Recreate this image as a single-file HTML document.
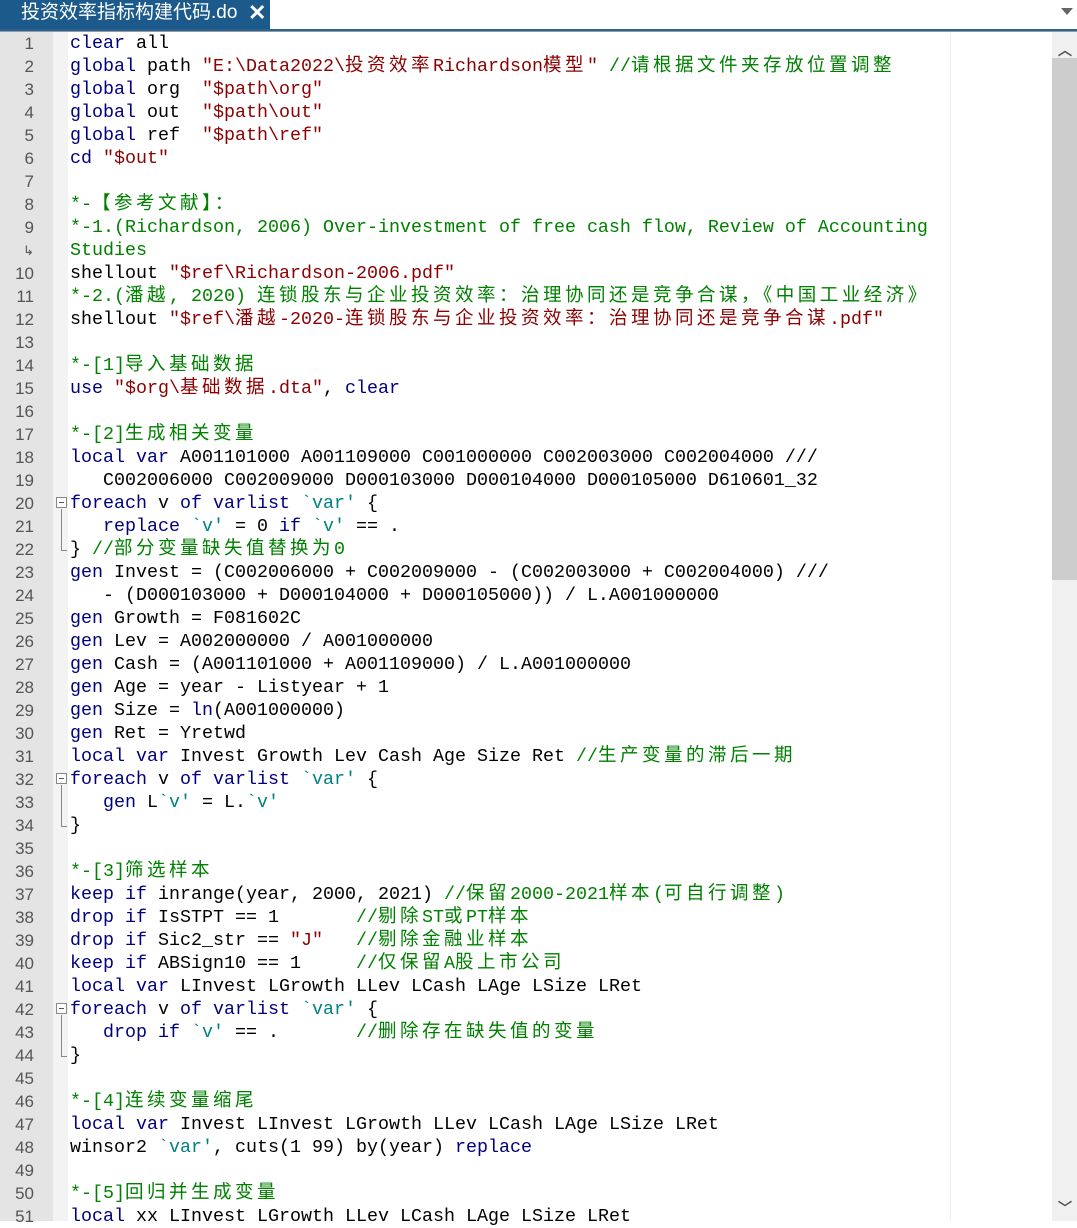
<!DOCTYPE html>
<html><head><meta charset="utf-8"><style>
*{margin:0;padding:0;box-sizing:border-box}
body{width:1077px;height:1221px;overflow:hidden;background:#fff;position:relative;font-family:"Liberation Mono","Noto Sans CJK SC",monospace}
#tabbar{position:absolute;left:0;top:0;width:1077px;height:29px;background:#fff}
#tab{position:absolute;left:0;top:0;width:270px;height:29px;background:#1b5a8a;color:#fff;font:19px "Liberation Sans","Noto Sans CJK SC",sans-serif;line-height:26px;padding-left:21px}
#tab b{position:absolute;left:248px;top:0;font-size:22px;font-weight:bold}
#dd{position:absolute;left:1061px;top:8px;width:0;height:0;border-left:6px solid transparent;border-right:6px solid transparent;border-top:7px solid #666}
#l1{position:absolute;left:0;top:29px;width:1077px;height:2px;background:#2a6496}
#l2{position:absolute;left:0;top:31px;width:1077px;height:1px;background:#999}
#gut{position:absolute;left:0;top:32px;width:53px;height:1189px;background:#e4e4e4}
#fold{position:absolute;left:53px;top:32px;width:15px;height:1189px;background:#f3f3f3}
#nums{position:absolute;left:0;top:32px;width:34px;text-align:right;font:17px "Liberation Sans",sans-serif;line-height:23px;color:#555}
#nums div{height:23px}
#code{position:absolute;left:70px;top:32px;font-size:18.33px;line-height:23px;white-space:pre;color:#000}
i{font-style:normal;font-family:"Noto Sans CJK SC",sans-serif;font-size:18.5px;letter-spacing:3.5px;line-height:0}
.k{color:#00007f}.s{color:#8b0000}.c{color:#008000}.m{color:#008080}
#edge{position:absolute;left:950px;top:32px;width:1px;height:1189px;background:#eee}
#sb{position:absolute;left:1052px;top:32px;width:25px;height:1189px;background:#f0f0f0}
#thumb{position:absolute;left:1052px;top:58px;width:25px;height:522px;background:#cdcdcd}
.fb{position:absolute;left:56px;width:11px;height:11px;border:1px solid #888;background:#fff}
.fb:after{content:"";position:absolute;left:2px;top:4px;width:5px;height:1px;background:#555}
.fl{position:absolute;left:61px;width:1px;background:#888}
.fe{position:absolute;left:61px;width:6px;height:1px;background:#888}
</style></head><body>
<div id="tabbar"><div id="tab">投资效率指标构建代码.do<b>✕</b></div><div id="dd"></div></div>
<div id="l1"></div><div id="l2"></div>
<div id="gut"></div><div id="fold"></div>
<div id="nums"><div>1</div><div>2</div><div>3</div><div>4</div><div>5</div><div>6</div><div>7</div><div>8</div><div>9</div><div style="font-size:13px">↳</div><div>10</div><div>11</div><div>12</div><div>13</div><div>14</div><div>15</div><div>16</div><div>17</div><div>18</div><div>19</div><div>20</div><div>21</div><div>22</div><div>23</div><div>24</div><div>25</div><div>26</div><div>27</div><div>28</div><div>29</div><div>30</div><div>31</div><div>32</div><div>33</div><div>34</div><div>35</div><div>36</div><div>37</div><div>38</div><div>39</div><div>40</div><div>41</div><div>42</div><div>43</div><div>44</div><div>45</div><div>46</div><div>47</div><div>48</div><div>49</div><div>50</div><div>51</div></div>
<div class="fb" style="top:497px"></div><div class="fl" style="top:509px;height:41px"></div><div class="fe" style="top:550px"></div>
<div class="fb" style="top:773px"></div><div class="fl" style="top:785px;height:41px"></div><div class="fe" style="top:826px"></div>
<div class="fb" style="top:1003px"></div><div class="fl" style="top:1015px;height:41px"></div><div class="fe" style="top:1056px"></div>
<div id="edge"></div>
<div id="code"><span class="k">clear</span> all
<span class="k">global</span> path <span class="s">"E:\Data2022\<i>投资效率</i>Richardson<i>模型</i>"</span> <span class="c">//<i>请根据文件夹存放位置调整</i></span>
<span class="k">global</span> org  <span class="s">"$path\org"</span>
<span class="k">global</span> out  <span class="s">"$path\out"</span>
<span class="k">global</span> ref  <span class="s">"$path\ref"</span>
<span class="k">cd</span> <span class="s">"$out"</span>

<span class="c">*-<i>【参考文献】：</i></span>
<span class="c">*-1.(Richardson, 2006) Over-investment of free cash flow, Review of Accounting</span>
<span class="c">Studies</span>
shellout <span class="s">"$ref\Richardson-2006.pdf"</span>
<span class="c">*-2.(<i>潘越</i>, 2020) <i>连锁股东与企业投资效率：治理协同还是竞争合谋，《中国工业经济》</i></span>
shellout <span class="s">"$ref\<i>潘越</i>-2020-<i>连锁股东与企业投资效率：治理协同还是竞争合谋</i>.pdf"</span>

<span class="c">*-[1]<i>导入基础数据</i></span>
<span class="k">use</span> <span class="s">"$org\<i>基础数据</i>.dta"</span>, <span class="k">clear</span>

<span class="c">*-[2]<i>生成相关变量</i></span>
<span class="k">local</span> <span class="k">var</span> A001101000 A001109000 C001000000 C002003000 C002004000 ///
   C002006000 C002009000 D000103000 D000104000 D000105000 D610601_32
<span class="k">foreach</span> v <span class="k">of</span> <span class="k">varlist</span> <span class="m">`var'</span> {
   <span class="k">replace</span> <span class="m">`v'</span> = 0 <span class="k">if</span> <span class="m">`v'</span> == .
} <span class="c">//<i>部分变量缺失值替换为</i>0</span>
<span class="k">gen</span> Invest = (C002006000 + C002009000 - (C002003000 + C002004000) ///
   - (D000103000 + D000104000 + D000105000)) / L.A001000000
<span class="k">gen</span> Growth = F081602C
<span class="k">gen</span> Lev = A002000000 / A001000000
<span class="k">gen</span> Cash = (A001101000 + A001109000) / L.A001000000
<span class="k">gen</span> Age = year - Listyear + 1
<span class="k">gen</span> Size = <span class="k">ln</span>(A001000000)
<span class="k">gen</span> Ret = Yretwd
<span class="k">local</span> <span class="k">var</span> Invest Growth Lev Cash Age Size Ret <span class="c">//<i>生产变量的滞后一期</i></span>
<span class="k">foreach</span> v <span class="k">of</span> <span class="k">varlist</span> <span class="m">`var'</span> {
   <span class="k">gen</span> L<span class="m">`v'</span> = L.<span class="m">`v'</span>
}

<span class="c">*-[3]<i>筛选样本</i></span>
<span class="k">keep</span> <span class="k">if</span> inrange(year, 2000, 2021) <span class="c">//<i>保留</i>2000-2021<i>样本</i>(<i>可自行调整</i>)</span>
<span class="k">drop</span> <span class="k">if</span> IsSTPT == 1       <span class="c">//<i>剔除</i>ST<i>或</i>PT<i>样本</i></span>
<span class="k">drop</span> <span class="k">if</span> Sic2_str == <span class="s">"J"</span>   <span class="c">//<i>剔除金融业样本</i></span>
<span class="k">keep</span> <span class="k">if</span> ABSign10 == 1     <span class="c">//<i>仅保留</i>A<i>股上市公司</i></span>
<span class="k">local</span> <span class="k">var</span> LInvest LGrowth LLev LCash LAge LSize LRet
<span class="k">foreach</span> v <span class="k">of</span> <span class="k">varlist</span> <span class="m">`var'</span> {
   <span class="k">drop</span> <span class="k">if</span> <span class="m">`v'</span> == .       <span class="c">//<i>删除存在缺失值的变量</i></span>
}

<span class="c">*-[4]<i>连续变量缩尾</i></span>
<span class="k">local</span> <span class="k">var</span> Invest LInvest LGrowth LLev LCash LAge LSize LRet
winsor2 <span class="m">`var'</span>, cuts(1 99) by(year) <span class="k">replace</span>

<span class="c">*-[5]<i>回归并生成变量</i></span>
<span class="k">local</span> xx LInvest LGrowth LLev LCash LAge LSize LRet</div>
<div id="sb"></div><div id="thumb"></div>
<div style="position:absolute;left:1058px;top:40px;color:#555;font:bold 14px 'DejaVu Sans',sans-serif">︿</div>
<div style="position:absolute;left:1058px;top:1198px;color:#555;font:bold 14px 'DejaVu Sans',sans-serif">﹀</div>
</body></html>
